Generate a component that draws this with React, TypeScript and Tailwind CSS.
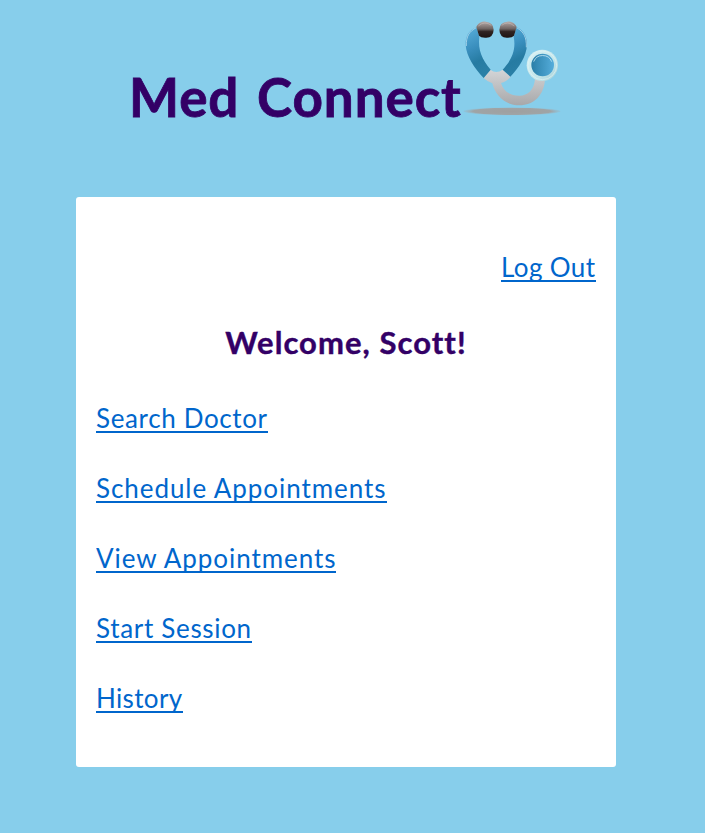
import React from "react";

const links = [
  { label: "Search Doctor", style: "w-[172px] tracking-[0.64px]" },
  { label: "Schedule Appointments", style: "w-[291px] tracking-[0.94px]" },
  { label: "View Appointments", style: "w-[240px] tracking-[0.94px]" },
  { label: "Start Session", style: "w-[156px] tracking-[0.68px]" },
  { label: "History", style: "w-[87px] tracking-[0.35px]" },
];

function TextLink({ label, style }: { label: string; style: string }) {
  return (
    <a
      href="#"
      className={`block h-[31px] overflow-hidden whitespace-nowrap border-b-2 border-[#0066cc] text-[26px] leading-[32px] text-[#0066cc] ${style}`}
    >
      {label}
    </a>
  );
}

function Stethoscope() {
  return (
    <svg viewBox="24 30 294 291" className="h-[97px] w-[98px] shrink-0" aria-hidden="true">
      <defs>
        <linearGradient id="tube" x1="0" y1="0" x2="0.25" y2="1">
          <stop offset="0" stopColor="#5ab0dc" />
          <stop offset="0.45" stopColor="#3a8fbe" />
          <stop offset="0.75" stopColor="#267ba2" />
          <stop offset="1" stopColor="#2a7fa6" />
        </linearGradient>
        <linearGradient id="tip" x1="0" y1="0" x2="0" y2="1">
          <stop offset="0" stopColor="#b5aaa8" />
          <stop offset="0.45" stopColor="#6e6361" />
          <stop offset="0.62" stopColor="#302422" />
          <stop offset="1" stopColor="#1e1412" />
        </linearGradient>
        <linearGradient id="steel" x1="0" y1="0" x2="0" y2="1">
          <stop offset="0" stopColor="#d4d5d7" />
          <stop offset="0.4" stopColor="#c2c3c5" />
          <stop offset="1" stopColor="#a8a8aa" />
        </linearGradient>
        <linearGradient id="lens" x1="0" y1="0" x2="1" y2="0">
          <stop offset="0" stopColor="#2a7fa8" />
          <stop offset="1" stopColor="#55addb" />
        </linearGradient>
        <linearGradient id="rim" x1="0" y1="0" x2="1" y2="1">
          <stop offset="0" stopColor="#d9f2f5" />
          <stop offset="0.6" stopColor="#c4e6ea" />
          <stop offset="1" stopColor="#a5d0d8" />
        </linearGradient>
        <radialGradient id="ground">
          <stop offset="0" stopColor="#9f9f9f" />
          <stop offset="0.8" stopColor="#9fa4a6" />
          <stop offset="1" stopColor="#9cb4c0" stopOpacity="0.3" />
        </radialGradient>
      </defs>
      <ellipse cx="171" cy="304" rx="146" ry="12" fill="url(#ground)" />
      <path
        d="M86 204 L106 179 Q124 193 143 179 L167 200 Q155 215 138 219 C145 242 163 257 193 257 C219 257 237 240 240 207 L270 207 C268 255 237 286 193 286 C151 286 121 257 112 220 Q96 214 86 204Z"
        fill="url(#steel)"
      />
      <path d="M64 51 C42 62 31 77 32 105 C34 139 58 175 86 204 L107 179 C82 149 68 120 73 80Z" fill="url(#tube)" />
      <path d="M185 51 C207 63 216 80 216 105 C214 140 192 173 166 200 L143 179 C165 155 185 125 176 80Z" fill="url(#tube)" />
      <path d="M64 53 C43 64 33 78 34 108 M185 53 C207 66 215 82 214 112" fill="none" stroke="#c5e5f4" strokeWidth="2.5" opacity="0.85" />
      <path d="M64 51 C70 38 81 34 92 35 Q115 36 116 59 Q115 82 94 83 Q78 84 72 77Z" fill="url(#tip)" />
      <path d="M185 51 C179 38 168 34 157 35 Q134 36 133 59 Q134 82 155 83 Q171 84 177 77Z" fill="url(#tip)" />
      <path d="M70 48 Q89 31 109 46 M140 46 Q158 31 178 48" fill="none" stroke="#d4cac7" strokeWidth="2" opacity="0.65" />
      <circle cx="262" cy="166" r="47" fill="url(#rim)" />
      <circle cx="262" cy="166" r="43" fill="none" stroke="#e2f5f7" strokeWidth="3" opacity="0.6" />
      <circle cx="263" cy="165" r="34" fill="url(#lens)" />
      <path d="M236 155 A29 29 0 0 1 290 155" fill="none" stroke="#c2e4f1" strokeWidth="2.5" />
    </svg>
  );
}

export default function App() {
  return (
    <main className="h-[833px] w-[705px] overflow-hidden bg-[#87ceeb] font-['Lato','Liberation_Sans',sans-serif]">
      <header className="flex h-[197px] items-start pl-[129px] pt-5">
        <h1 className="mt-[45px] w-[334px] shrink-0 whitespace-nowrap text-[53px] font-bold leading-[64px] tracking-[0.9px] text-[#330066] [-webkit-text-stroke:0.8px_#330066] [word-spacing:4px]">
          Med Connect
        </h1>
        <Stethoscope />
      </header>
      <section className="ml-[76px] h-[570px] w-[540px] rounded-[3px] bg-white px-5 pt-[54px]">
        <nav className="flex justify-end">
          <TextLink label="Log Out" style="w-[95px] tracking-[0.4px]" />
        </nav>
        <h2 className="mt-10 h-10 text-center text-[31px] font-bold leading-[40px] tracking-[1.05px] text-[#330066] [-webkit-text-stroke:0.4px_#330066]">
          Welcome, Scott!
        </h2>
        <nav className="mt-10 flex flex-col gap-[39px]">
          {links.map((link) => (
            <TextLink key={link.label} {...link} />
          ))}
        </nav>
      </section>
    </main>
  );
}
